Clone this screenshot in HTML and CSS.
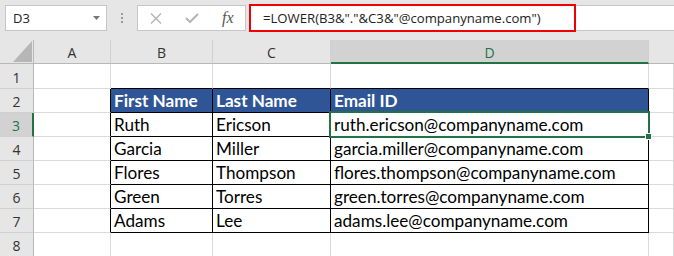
FILE: index.html
```html
<!DOCTYPE html>
<html>
<head>
<meta charset="utf-8">
<link rel="stylesheet" href="styles.css">
</head>
<body>
<div class="toolbar">
  <div class="namebox"><span>D3</span><svg class="dd" width="7" height="4" viewBox="0 0 7 4"><polygon points="0,0 7,0 3.5,4" fill="#777"/></svg></div>
  <div class="grip"><i></i><i></i><i></i></div>
  <div class="fbuttons">
    <svg width="12" height="11" viewBox="0 0 12 11"><path d="M1 0.5 L11 10.5 M11 0.5 L1 10.5" stroke="#b4b4b4" stroke-width="1.4" fill="none"/></svg>
    <svg width="14" height="10" viewBox="0 0 14 10"><polyline points="1,5 5,9 13,1" stroke="#b4b4b4" stroke-width="2" fill="none"/></svg>
    <span class="fx">fx</span>
  </div>
  <div class="formula"><div class="fhl">=LOWER(B3&amp;"."&amp;C3&amp;"@companyname.com")</div></div>
</div>
<div class="sheet">
  <div class="corner"><svg width="33" height="23" viewBox="0 0 33 23"><polygon points="32,1 32,22 13,22" fill="#b6b6b6"/></svg></div>
  <div class="ch">A</div><div class="ch">B</div><div class="ch">C</div><div class="ch sel">D</div><div class="ch end"></div>

  <div class="rh">1</div><div class="c"></div><div class="c tb"></div><div class="c tb"></div><div class="c tb"></div><div class="c"></div>
  <div class="rh">2</div><div class="c lb"></div><div class="th">First Name</div><div class="th">Last Name</div><div class="th">Email ID</div><div class="c"></div>
  <div class="rh sel">3</div><div class="c lb"></div><div class="td">Ruth</div><div class="td">Ericson</div><div class="td">ruth.ericson@companyname.com</div><div class="c"></div>
  <div class="rh">4</div><div class="c lb"></div><div class="td">Garcia</div><div class="td">Miller</div><div class="td">garcia.miller@companyname.com</div><div class="c"></div>
  <div class="rh">5</div><div class="c lb"></div><div class="td">Flores</div><div class="td">Thompson</div><div class="td">flores.thompson@companyname.com</div><div class="c"></div>
  <div class="rh">6</div><div class="c lb"></div><div class="td">Green</div><div class="td">Torres</div><div class="td">green.torres@companyname.com</div><div class="c"></div>
  <div class="rh">7</div><div class="c lb"></div><div class="td">Adams</div><div class="td">Lee</div><div class="td">adams.lee@companyname.com</div><div class="c"></div>
  <div class="rh">8</div><div class="c"></div><div class="c"></div><div class="c"></div><div class="c"></div><div class="c"></div>

  <div class="active"></div>
  <div class="handle"></div>
</div>
</body>
</html>
```
FILE: styles.css
```css
* { box-sizing: border-box; margin: 0; padding: 0; }
body { margin: 0; width: 674px; height: 256px; overflow: hidden; background: #fff; font-family: "Lato", sans-serif; }

.toolbar { height: 40px; background: #e6e6e6; display: flex; align-items: flex-start; padding: 5px 0 0 5px; }
.namebox { width: 102px; height: 26px; background: #fff; border: 1px solid #c6c6c6; display: flex; align-items: center; padding: 0 6px 0 7px; font-family: "Open Sans", sans-serif; font-size: 13px; color: #222; }
.namebox .dd { margin-left: auto; }
.grip { display: flex; flex-direction: column; gap: 2px; margin: 8px 14px 0; }
.grip i { display: block; width: 2px; height: 2px; background: #9a9a9a; }
.fbuttons { width: 109px; height: 26px; background: #fff; border: 1px solid #c6c6c6; display: flex; align-items: center; gap: 23px; padding-left: 12px; }
.fx { font-family: "Liberation Serif", serif; font-style: italic; font-size: 16px; color: #555; line-height: 16px; }
.formula { flex: 1; margin-left: 3px; height: 26px; background: #fff; border-top: 1px solid #c6c6c6; border-bottom: 1px solid #c6c6c6; }
.fhl { width: 327px; height: 28px; margin-top: -2px; border: 2px solid #f00000; display: flex; align-items: center; padding-left: 12px; font-family: "Open Sans", sans-serif; font-size: 13.15px; color: #222; white-space: nowrap; }

.sheet { position: relative; display: grid; grid-template-columns: 34px 77px 102px 118px 318px 1fr; grid-template-rows: 24px 25px repeat(7, 24px); }
.sheet > div { border-right: 1px solid #dadada; border-bottom: 1px solid #dadada; }

.sheet > .corner { background: #e6e6e6; border-right: 1px solid #b8b8b8; border-bottom: 1px solid #b8b8b8; }
.corner svg { display: block; }
.sheet > .ch { background: #e6e6e6; border-right: 1px solid #d0d0d0; border-bottom: 1px solid #b8b8b8; display: flex; align-items: center; justify-content: center; padding-top: 2px; font-family: "Open Sans", sans-serif; font-size: 14px; line-height: 19px; color: #333; }
.sheet > .ch.sel { background: #d2d2d2; color: #217346; border-bottom: 2px solid #217346; }
.sheet > .ch.end { border-right: none; }
.sheet > .rh { background: #e6e6e6; border-right: 1px solid #b8b8b8; border-bottom: 1px solid #d0d0d0; display: flex; align-items: flex-end; justify-content: center; padding-bottom: 1px; font-family: "Open Sans", sans-serif; font-size: 14px; line-height: 19px; color: #333; }
.sheet > .rh.sel { background: #d2d2d2; color: #217346; border-right: 2px solid #217346; }

.sheet > .tb { border-bottom-color: #000; }
.sheet > .lb { border-right-color: #000; }
.sheet > .th, .sheet > .td { border-right: 1px solid #000; border-bottom: 1px solid #000; display: flex; align-items: flex-end; padding: 0 0 1px 3px; font-size: 17.15px; line-height: 20px; color: #000; white-space: nowrap; }
.sheet > .th { background: #2f5597; color: #fff; font-weight: bold; }

.sheet > .active { position: absolute; left: 329px; top: 71px; width: 321px; height: 27px; border: 2px solid #217346; }
.sheet > .handle { position: absolute; left: 645px; top: 93px; width: 7px; height: 7px; background: #217346; border: 1px solid #fff; }
```
